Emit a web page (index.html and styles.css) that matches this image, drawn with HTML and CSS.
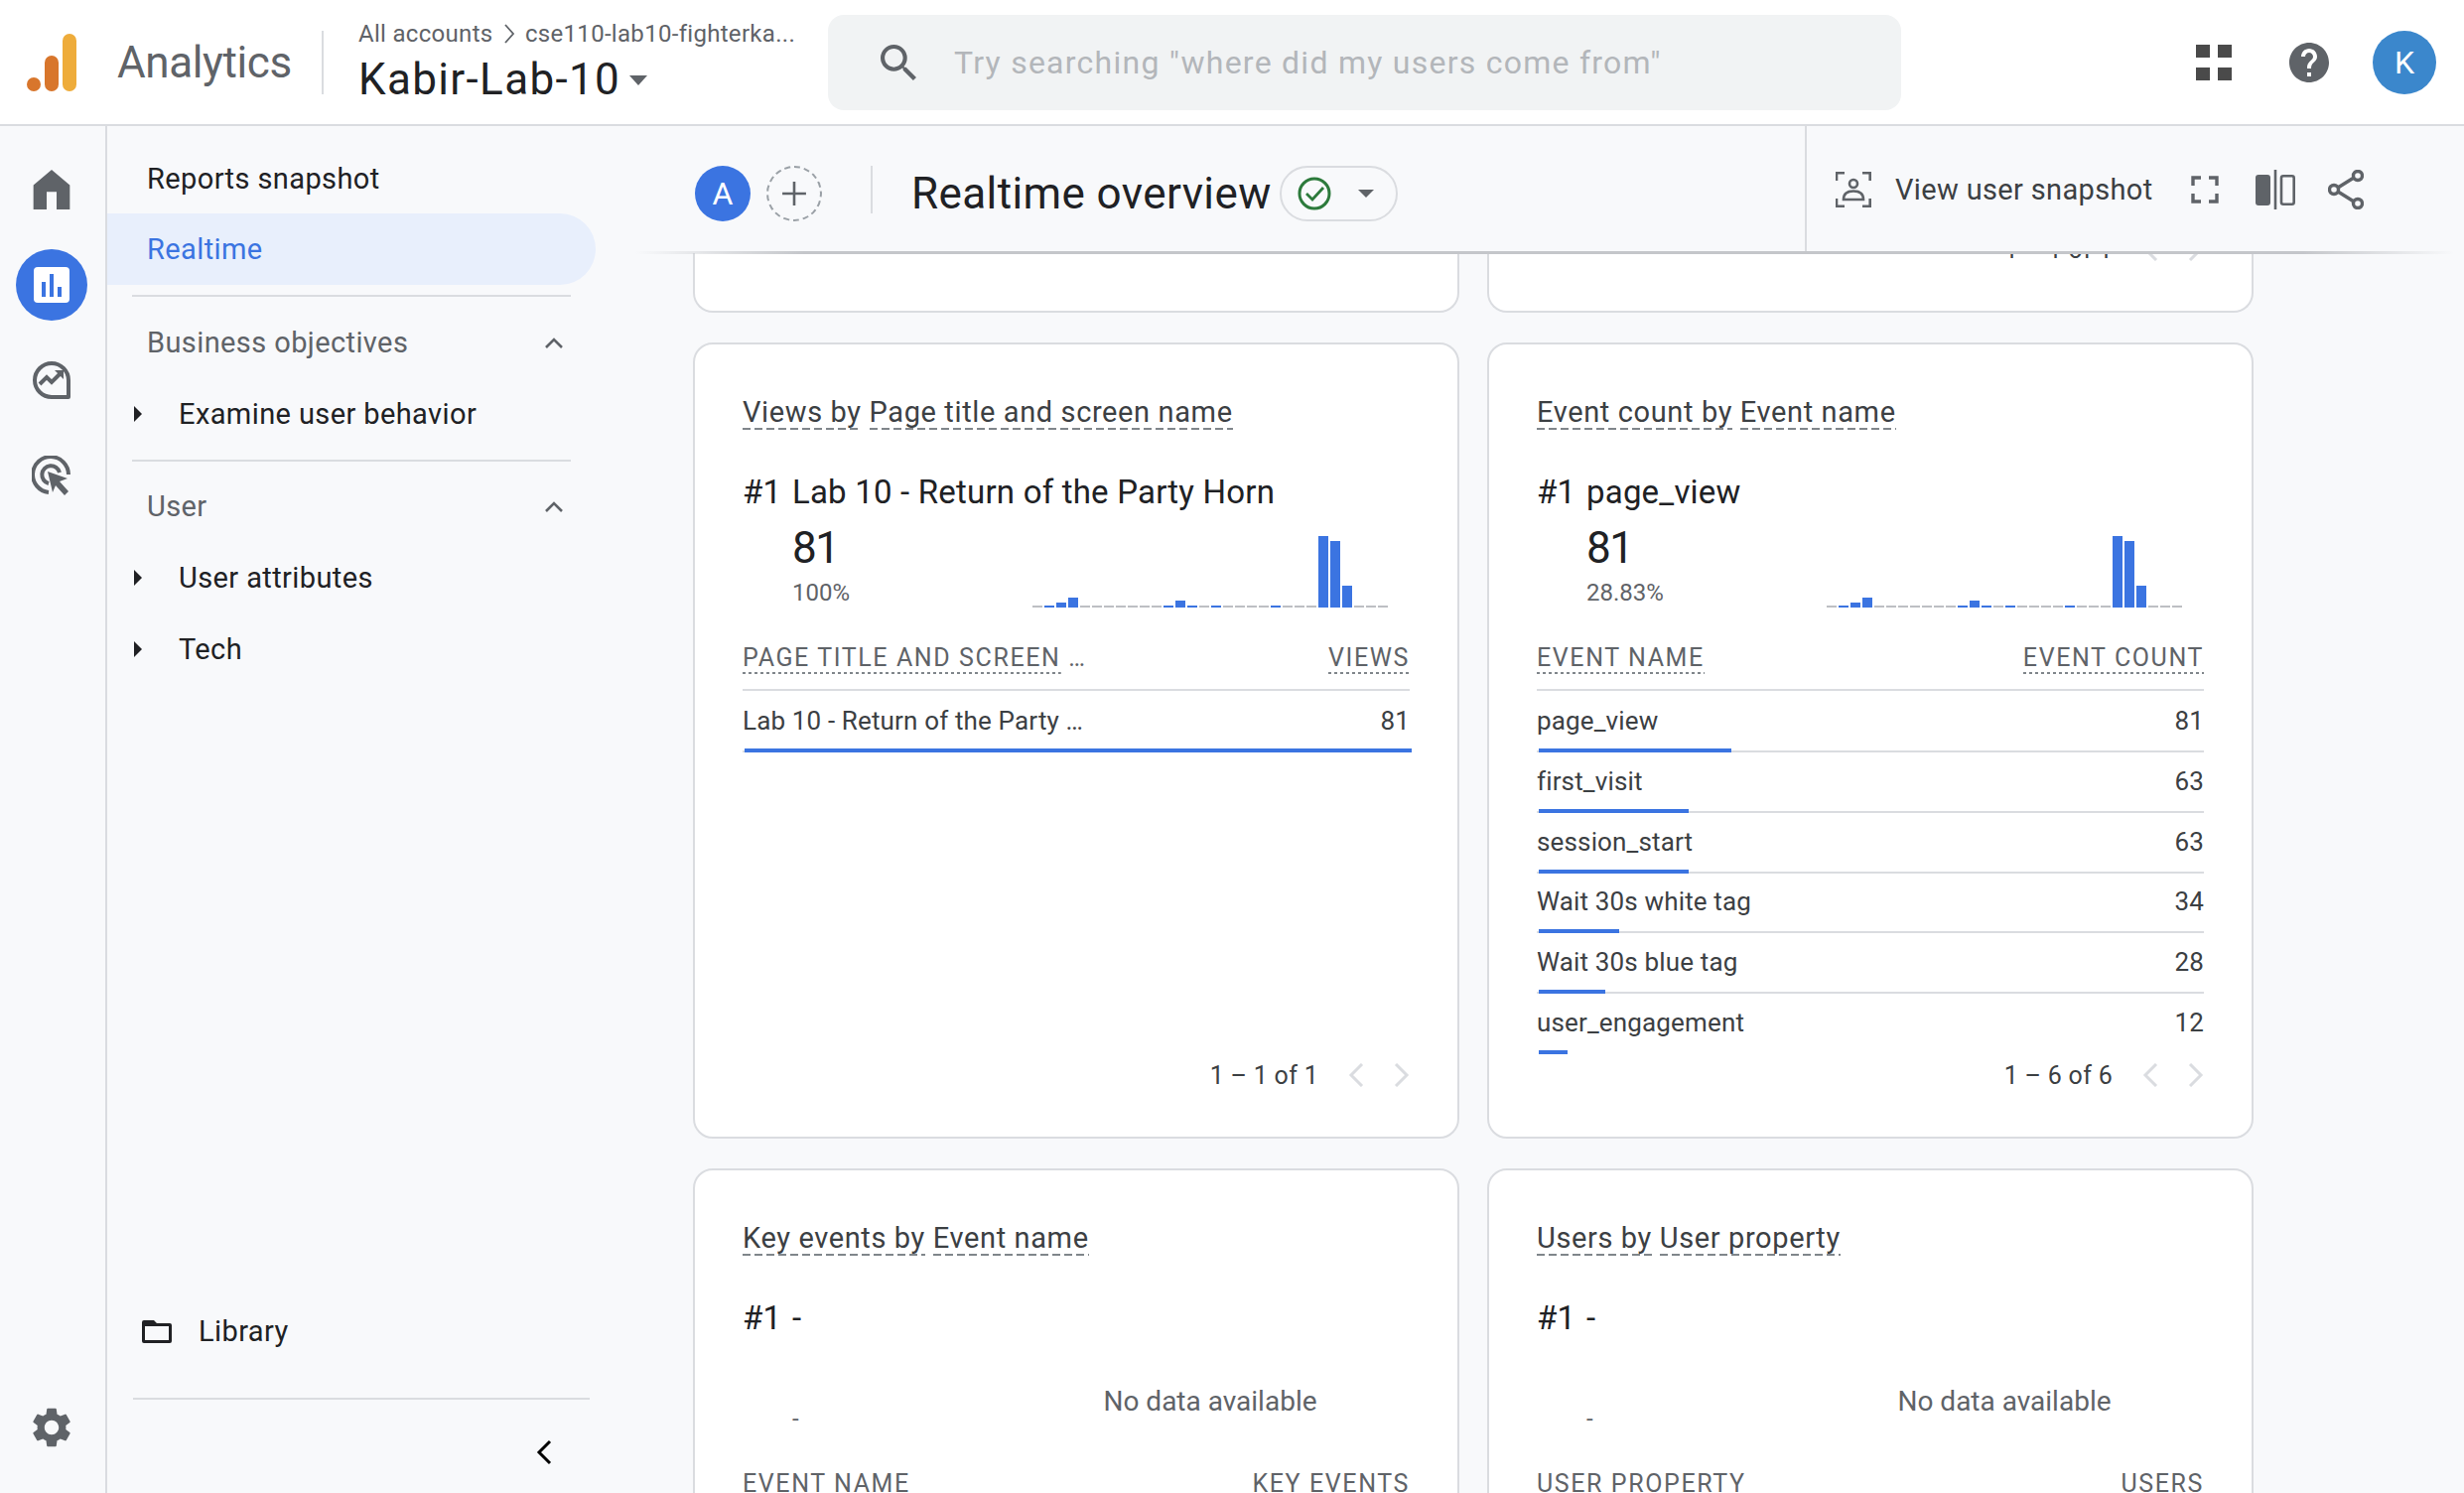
FILE: index.html
```html
<!DOCTYPE html>
<html lang="en">
<head>
    <meta charset="UTF-8">
    <title>Realtime overview - Analytics</title>
    <link rel="stylesheet" href="styles.css">
</head>
<body>
    <svg class="sprite" xmlns="http://www.w3.org/2000/svg">
        <symbol id="chart-a" viewBox="0 0 358 72">
            <g class="bar-off">
                <rect x="0" y="70" width="10" height="2"/><rect x="48" y="70" width="10" height="2"/><rect x="60" y="70" width="10" height="2"/><rect x="72" y="70" width="10" height="2"/><rect x="84" y="70" width="10" height="2"/><rect x="96" y="70" width="10" height="2"/><rect x="108" y="70" width="10" height="2"/><rect x="120" y="70" width="10" height="2"/><rect x="168" y="70" width="10" height="2"/><rect x="192" y="70" width="10" height="2"/><rect x="204" y="70" width="10" height="2"/><rect x="216" y="70" width="10" height="2"/><rect x="228" y="70" width="10" height="2"/><rect x="252" y="70" width="10" height="2"/><rect x="264" y="70" width="10" height="2"/><rect x="276" y="70" width="10" height="2"/><rect x="324" y="70" width="10" height="2"/><rect x="336" y="70" width="10" height="2"/><rect x="348" y="70" width="10" height="2"/>
            </g>
            <g class="bar-on">
                <rect x="12" y="70" width="10" height="2"/><rect x="24" y="67" width="10" height="5"/><rect x="36" y="62" width="10" height="10"/><rect x="132" y="70" width="10" height="2"/><rect x="144" y="65" width="10" height="7"/><rect x="156" y="70" width="10" height="2"/><rect x="180" y="70" width="10" height="2"/><rect x="240" y="70" width="10" height="2"/><rect x="288" y="0" width="10" height="72"/><rect x="300" y="5" width="10" height="67"/><rect x="312" y="50" width="10" height="22"/>
            </g>
        </symbol>
        <symbol id="chev-left" viewBox="0 0 16 24"><path d="M14 1 3 12l11 11" fill="none" stroke="currentColor" stroke-width="3"/></symbol>
        <symbol id="chev-right" viewBox="0 0 16 24"><path d="m2 1 11 11-11 11" fill="none" stroke="currentColor" stroke-width="3"/></symbol>
        <symbol id="chev-up" viewBox="0 0 20 12"><path d="M2 11 10 3l8 8" fill="none" stroke="currentColor" stroke-width="2.6"/></symbol>
        <symbol id="tri-right" viewBox="0 0 8 16"><path d="M0 0l8 8-8 8z" fill="currentColor"/></symbol>
    </svg>

    <header class="topbar">
        <svg class="logo" viewBox="0 0 50 58">
            <rect x="36" y="0" width="14" height="58" rx="7" fill="#eeac3b"/>
            <rect x="18" y="22" width="14" height="36" rx="7" fill="#d8762c"/>
            <circle cx="7" cy="51" r="7" fill="#d8762c"/>
        </svg>
        <div class="brand">Analytics</div>
        <div class="account">
            <div class="crumbs">All accounts
                <svg class="crumb-chev" viewBox="0 0 12 24"><path d="m2 3 8 9-8 9" fill="none" stroke="currentColor" stroke-width="1.8"/></svg>
                cse110-lab10-fighterka...</div>
            <div class="property">Kabir-Lab-10<span class="caret caret-large"></span></div>
        </div>
        <div class="search">
            <svg class="search-icon" viewBox="3 3 17.5 17.5"><path d="M15.5 14h-.79l-.28-.27A6.471 6.471 0 0 0 16 9.5 6.5 6.5 0 1 0 9.5 16c1.61 0 3.09-.59 4.23-1.57l.27.28v.79l5 4.99L20.49 19l-4.99-5zm-6 0C7.01 14 5 11.99 5 9.5S7.01 5 9.5 5 14 7.01 14 9.5 11.99 14 9.5 14z"/></svg>
            <input class="search-input" type="text" placeholder="Try searching &quot;where did my users come from&quot;">
        </div>
        <div class="top-actions">
            <div class="apps"><span></span><span></span><span></span><span></span></div>
            <svg class="help" viewBox="2 2 20 20"><path d="M12 2C6.48 2 2 6.48 2 12s4.48 10 10 10 10-4.48 10-10S17.52 2 12 2zm1 17h-2v-2h2v2zm2.07-7.75l-.9.92C13.45 12.9 13 13.5 13 15h-2v-.5c0-1.1.45-2.1 1.17-2.83l1.24-1.26c.37-.36.59-.86.59-1.41 0-1.1-.9-2-2-2s-2 .9-2 2H8c0-2.21 1.79-4 4-4s4 1.79 4 4c0 .88-.36 1.68-.93 2.25z"/></svg>
            <div class="avatar-k">K</div>
        </div>
    </header>

    <div class="layout">
        <nav class="rail">
            <div class="rail-item">
                <svg class="rail-icon" viewBox="0 0 33 36"><path d="M16.500 0 33 14v22H21V20h-9v16H0V14z"/></svg>
            </div>
            <div class="rail-item">
                <div class="rail-active">
                    <svg viewBox="0 0 36 36" width="36" height="36">
                        <rect width="36" height="36" rx="4" fill="#fff"/>
                        <path d="M8 15h4v15H8zM16 7h4v23h-4zM24 20h4v10h-4z" fill="#3b74e1"/>
                    </svg>
                </div>
            </div>
            <div class="rail-item">
                <svg class="rail-icon" viewBox="0 0 40 40">
                    <path d="M37 37V20A17 17 0 1 0 20 37z" fill="none" stroke="#5f6368" stroke-width="4" stroke-linejoin="round"/>
                    <path d="M8 24l7-7 5 5 9-9" fill="none" stroke="#5f6368" stroke-width="4"/>
                    <path d="M23 10h9v9z" fill="#5f6368"/>
                </svg>
            </div>
            <div class="rail-item">
                <svg class="rail-icon" viewBox="0 0 40 40">
                    <path d="M17 37A18 18 0 1 1 37 19" fill="none" stroke="#5f6368" stroke-width="4"/>
                    <path d="M17 28a9 9 0 1 1 11-11" fill="none" stroke="#5f6368" stroke-width="4"/>
                    <path d="M16 16l20 7-8 3 9 10-4 4-9-10-3 7z" fill="#5f6368"/>
                </svg>
            </div>
            <div class="rail-item rail-bottom">
                <svg class="rail-icon rail-gear" viewBox="2.500 2 19 20"><path d="M19.140 12.940c.04-.3.06-.61.06-.94 0-.32-.02-.64-.07-.94l2.030-1.580a.49.49 0 0 0 .12-.61l-1.920-3.320a.488.488 0 0 0-.59-.22l-2.390.96c-.5-.38-1.030-.7-1.620-.94l-.36-2.540a.484.484 0 0 0-.48-.41h-3.840c-.24 0-.43.17-.47.41l-.36 2.540c-.59.24-1.130.57-1.620.94l-2.390-.96c-.22-.08-.47 0-.59.22L2.740 8.870c-.12.21-.08.47.12.61l2.030 1.580c-.05.3-.09.63-.09.94s.02.64.07.94l-2.030 1.580a.49.49 0 0 0-.12.61l1.920 3.320c.12.22.37.29.59.22l2.390-.96c.5.38 1.030.7 1.620.94l.36 2.540c.05.24.24.41.48.41h3.840c.24 0 .44-.17.47-.41l.36-2.540c.59-.24 1.130-.56 1.620-.94l2.390.96c.22.08.47 0 .59-.22l1.920-3.320c.12-.22.07-.47-.12-.61l-2.010-1.580zM12 15.600c-1.980 0-3.600-1.620-3.600-3.600s1.620-3.600 3.600-3.600 3.600 1.620 3.600 3.600-1.620 3.600-3.600 3.600z"/></svg>
            </div>
        </nav>

        <aside class="sidenav">
            <div class="nav-link">Reports snapshot</div>
            <div class="nav-link nav-current">Realtime</div>
            <div class="nav-rule"></div>
            <div class="nav-group">Business objectives
                <svg class="nav-chev"><use href="#chev-up"/></svg>
            </div>
            <div class="nav-sub nav-sub-first"><svg class="nav-tri"><use href="#tri-right"/></svg>Examine user behavior</div>
            <div class="nav-rule nav-rule-b"></div>
            <div class="nav-group nav-group-b">User
                <svg class="nav-chev"><use href="#chev-up"/></svg>
            </div>
            <div class="nav-sub nav-sub-first"><svg class="nav-tri"><use href="#tri-right"/></svg>User attributes</div>
            <div class="nav-sub"><svg class="nav-tri"><use href="#tri-right"/></svg>Tech</div>
            <div class="nav-footer">
                <div class="library">
                    <svg class="folder" viewBox="0 0 30 24"><path d="M2 1h10l3 3h13a2 2 0 0 1 2 2v16a2 2 0 0 1-2 2H2a2 2 0 0 1-2-2V3a2 2 0 0 1 2-2zm1 6v14h24V7z" fill="#202124"/></svg>
                    Library
                </div>
                <div class="nav-foot-rule"></div>
                <div class="collapse">
                    <svg class="collapse-chev"><use href="#chev-left"/></svg>
                </div>
            </div>
        </aside>

        <main class="main">
            <div class="toolbar">
                <div class="tool-left">
                    <div class="avatar-a">A</div>
                    <div class="add-compare">
                        <svg viewBox="0 0 24 24" width="26" height="26"><path d="M12 1v22M1 12h22" stroke="#5f6368" stroke-width="2.400"/></svg>
                    </div>
                    <div class="tool-sep"></div>
                    <h1 class="page-title">Realtime overview</h1>
                    <div class="status-pill">
                        <svg viewBox="0 0 34 34" width="34" height="34">
                            <circle cx="17" cy="17" r="15" fill="none" stroke="#2c7a3b" stroke-width="3"/>
                            <path d="M9 17l6 6 11-12" fill="none" stroke="#2c7a3b" stroke-width="2.800"/>
                        </svg>
                        <span class="caret caret-small"></span>
                    </div>
                </div>
                <div class="tool-right">
                    <svg class="snap-icon" viewBox="0 0 36 36" fill="none" stroke="#5f6368" stroke-width="2.600">
                        <path d="M1 9V1.300h8M27 1.300h7.700V9M1 27v7.700h8M27 34.700h7.700V27"/>
                        <circle cx="18" cy="12" r="4"/>
                        <path d="M8 28c0-6 4-8.500 10-8.500S28 22 28 28z"/>
                    </svg>
                    <span class="snap-label">View user snapshot</span>
                    <svg class="full-icon" viewBox="0 0 28 28" fill="none" stroke="#5f6368" stroke-width="3.400"><path d="M2 10V2h8M18 2h8v8M2 18v8h8M18 26h8v-8"/></svg>
                    <svg class="compare-icon" viewBox="0 0 40 40">
                        <rect x="0" y="5" width="15" height="31" rx="3" fill="#5f6368"/>
                        <path d="M20 0v40" stroke="#5f6368" stroke-width="2.600"/>
                        <rect x="26" y="6.300" width="12.700" height="28.400" rx="2" fill="none" stroke="#5f6368" stroke-width="2.600"/>
                    </svg>
                    <svg class="share-icon" viewBox="0 0 36 40" fill="none" stroke="#5f6368" stroke-width="3.400">
                        <circle cx="30" cy="6" r="4.500"/><circle cx="6" cy="20" r="4.500"/><circle cx="30" cy="34" r="4.500"/>
                        <path d="M10 18 26 8M10 22l16 10"/>
                    </svg>
                </div>
            </div>

            <div class="cards">
                <section class="card card-cut"></section>
                <section class="card card-cut">
                    <div class="pager pager-cut">
                        <span>1 – 1 of 1</span>
                        <svg class="pager-chev"><use href="#chev-left"/></svg>
                        <svg class="pager-chev"><use href="#chev-right"/></svg>
                    </div>
                </section>

                <section class="card">
                    <h2 class="card-title"><span class="dash">Views by</span> <span class="dash">Page title and screen name</span></h2>
                    <div class="top-item"><span class="rank">#1</span>Lab 10 - Return of the Party Horn</div>
                    <div class="summary">
                        <div class="stat">
                            <div class="stat-value">81</div>
                            <div class="stat-pct">100%</div>
                        </div>
                        <svg class="spark"><use href="#chart-a"/></svg>
                    </div>
                    <div class="table-head">
                        <span><span class="dots">PAGE TITLE AND SCREEN </span> …</span>
                        <span class="dots">VIEWS</span>
                    </div>
                    <div class="row">
                        <div class="row-text"><span>Lab 10 - Return of the Party …</span><span>81</span></div>
                        <div class="track"><div class="fill" style="width:100%"></div></div>
                    </div>
                    <div class="pager">
                        <span>1 – 1 of 1</span>
                        <svg class="pager-chev"><use href="#chev-left"/></svg>
                        <svg class="pager-chev"><use href="#chev-right"/></svg>
                    </div>
                </section>

                <section class="card">
                    <h2 class="card-title"><span class="dash">Event count by</span> <span class="dash">Event name</span></h2>
                    <div class="top-item"><span class="rank">#1</span>page_view</div>
                    <div class="summary">
                        <div class="stat">
                            <div class="stat-value">81</div>
                            <div class="stat-pct">28.83%</div>
                        </div>
                        <svg class="spark"><use href="#chart-a"/></svg>
                    </div>
                    <div class="table-head">
                        <span class="dots">EVENT NAME</span>
                        <span class="dots">EVENT COUNT</span>
                    </div>
                    <div class="row">
                        <div class="row-text"><span>page_view</span><span>81</span></div>
                        <div class="track"><div class="fill" style="width:28.83%"></div></div>
                    </div>
                    <div class="row">
                        <div class="row-text"><span>first_visit</span><span>63</span></div>
                        <div class="track"><div class="fill" style="width:22.42%"></div></div>
                    </div>
                    <div class="row">
                        <div class="row-text"><span>session_start</span><span>63</span></div>
                        <div class="track"><div class="fill" style="width:22.42%"></div></div>
                    </div>
                    <div class="row">
                        <div class="row-text"><span>Wait 30s white tag</span><span>34</span></div>
                        <div class="track"><div class="fill" style="width:12.1%"></div></div>
                    </div>
                    <div class="row">
                        <div class="row-text"><span>Wait 30s blue tag</span><span>28</span></div>
                        <div class="track"><div class="fill" style="width:9.96%"></div></div>
                    </div>
                    <div class="row">
                        <div class="row-text"><span>user_engagement</span><span>12</span></div>
                        <div class="track track-last"><div class="fill" style="width:4.27%"></div></div>
                    </div>
                    <div class="pager">
                        <span>1 – 6 of 6</span>
                        <svg class="pager-chev"><use href="#chev-left"/></svg>
                        <svg class="pager-chev"><use href="#chev-right"/></svg>
                    </div>
                </section>

                <section class="card">
                    <h2 class="card-title"><span class="dash">Key events by</span> <span class="dash">Event name</span></h2>
                    <div class="top-item"><span class="rank">#1</span>-</div>
                    <div class="summary">
                        <div class="stat">
                            <div class="stat-value"></div>
                            <div class="stat-pct">-</div>
                        </div>
                        <div class="no-data">No data available</div>
                    </div>
                    <div class="table-head">
                        <span class="dots">EVENT NAME</span>
                        <span class="dots">KEY EVENTS</span>
                    </div>
                </section>

                <section class="card">
                    <h2 class="card-title"><span class="dash">Users by</span> <span class="dash">User property</span></h2>
                    <div class="top-item"><span class="rank">#1</span>-</div>
                    <div class="summary">
                        <div class="stat">
                            <div class="stat-value"></div>
                            <div class="stat-pct">-</div>
                        </div>
                        <div class="no-data">No data available</div>
                    </div>
                    <div class="table-head">
                        <span class="dots">USER PROPERTY</span>
                        <span class="dots">USERS</span>
                    </div>
                </section>
            </div>
        </main>
    </div>
</body>
</html>
```

FILE: styles.css
```css
* {
    box-sizing: border-box;
}

html {
    height: 1504px;
    overflow: hidden;
}

body {
    margin: 0;
    height: 1504px;
    overflow: hidden;
    font-family: Roboto, Arial, sans-serif;
    color: #202124;
    background: #f8f9fb;
}

.sprite {
    display: none;
}

/* top bar */
.topbar {
    display: flex;
    align-items: center;
    height: 127px;
    background: #fff;
    border-bottom: 2px solid #dadce0;
    padding-left: 27px;
}

.logo {
    width: 50px;
    height: 58px;
    flex: none;
}

.brand {
    width: 208px;
    height: 64px;
    margin-left: 41px;
    border-right: 2px solid #dadce0;
    font-size: 44px;
    line-height: 64px;
    color: #5f6368;
    letter-spacing: -0.4px;
}

.account {
    width: 508px;
    padding-left: 35px;
    flex: none;
}

.crumbs {
    font-size: 24px;
    line-height: 32px;
    color: #5f6368;
    white-space: nowrap;
    letter-spacing: 0.3px;
}

.crumb-chev {
    width: 12px;
    height: 24px;
    vertical-align: -4px;
    margin: 0 4px;
}

.property {
    font-size: 44px;
    line-height: 56px;
    margin-top: 2px;
    letter-spacing: 1.35px;
}

.caret {
    display: inline-block;
    border-left: 9px solid transparent;
    border-right: 9px solid transparent;
    border-top: 10px solid #5f6368;
    vertical-align: 6px;
}

.caret-large {
    margin-left: 9px;
    vertical-align: 9px;
}

.caret-small {
    border-left-width: 8.500px;
    border-right-width: 8.500px;
    border-top-width: 8px;
    vertical-align: 0;
    margin-left: 27px;
}

.search {
    display: flex;
    align-items: center;
    width: 1081px;
    height: 96px;
    flex: none;
    background: #f1f3f4;
    border-radius: 16px;
    padding-left: 53px;
}

.search-icon {
    width: 36px;
    height: 36px;
    fill: #5f6368;
    flex: none;
}

.search-input {
    flex: 1;
    margin-left: 38px;
    border: none;
    outline: none;
    background: transparent;
    padding: 0;
    font-family: Roboto, Arial, sans-serif;
    font-size: 32px;
    letter-spacing: 1.25px;
    color: #202124;
}

.search-input::placeholder {
    color: #b3b6ba;
    opacity: 1;
}

.top-actions {
    display: flex;
    align-items: center;
    margin-left: 297px;
}

.apps {
    display: grid;
    grid-template-columns: 14px 14px;
    grid-auto-rows: 13px;
    column-gap: 8px;
    row-gap: 10px;
    width: 36px;
}

.apps span {
    background: #4a4a4a;
}

.help {
    width: 40px;
    height: 40px;
    margin-left: 58px;
    fill: #5f6368;
}

.avatar-k {
    width: 64px;
    height: 64px;
    margin-left: 44px;
    border-radius: 50%;
    background: #3b87cc;
    color: #fff;
    font-size: 32px;
    line-height: 64px;
    text-align: center;
}

.layout {
    display: flex;
    height: 1377px;
    overflow: hidden;
}

/* left icon rail */
.rail {
    display: flex;
    flex-direction: column;
    width: 108px;
    flex: none;
    border-right: 2px solid #dadce0;
    padding: 16px 3px 42px 0;
}

.rail-item {
    display: flex;
    align-items: center;
    justify-content: center;
    height: 96px;
}

.rail-bottom {
    margin-top: auto;
    height: 48px;
}

.rail-icon {
    width: 40px;
    height: 40px;
    fill: #5f6368;
}

.rail-gear {
    width: 38px;
}

.rail-active {
    display: flex;
    align-items: center;
    justify-content: center;
    width: 72px;
    height: 72px;
    border-radius: 50%;
    background: #3b74e1;
}

/* side navigation */
.sidenav {
    display: flex;
    flex-direction: column;
    width: 532px;
    flex: none;
    padding-top: 18px;
    font-size: 29px;
    letter-spacing: 0.4px;
}

.nav-link {
    height: 70px;
    padding-left: 40px;
    line-height: 70px;
}

.nav-current {
    width: 492px;
    height: 72px;
    line-height: 72px;
    color: #3b74e1;
    background: #e8effc;
    border-radius: 0 36px 36px 0;
}

.nav-rule {
    width: 442px;
    height: 2px;
    margin: 10px 0 0 25px;
    background: #dadce0;
    flex: none;
}

.nav-rule-b {
    margin-top: 10px;
}

.nav-group {
    display: flex;
    align-items: center;
    justify-content: space-between;
    width: 460px;
    height: 64px;
    margin-top: 14px;
    padding-left: 40px;
    color: #5f6368;
}

.nav-group-b {
    margin-top: 13px;
}

.nav-chev {
    width: 20px;
    height: 12px;
    color: #5f6368;
}

.nav-sub {
    display: flex;
    align-items: center;
    height: 72px;
    padding-left: 27px;
}

.nav-sub-first {
    margin-top: 4px;
}

.nav-tri {
    width: 8px;
    height: 16px;
    margin-right: 37px;
    color: #202124;
}

.nav-footer {
    margin-top: auto;
}

.library {
    display: flex;
    align-items: center;
    height: 62px;
    padding-left: 35px;
}

.folder {
    width: 30px;
    height: 24px;
    margin-right: 27px;
}

.nav-foot-rule {
    width: 460px;
    height: 2px;
    margin: 36px 0 0 26px;
    background: #dadce0;
}

.collapse {
    height: 94px;
    padding: 40px 0 0 432px;
}

.collapse-chev {
    display: block;
    width: 16px;
    height: 26px;
    color: #000;
}

/* main area */
.main {
    flex: 1;
    min-width: 0;
    display: flex;
    flex-direction: column;
    overflow: hidden;
}

.toolbar {
    position: relative;
    z-index: 2;
    display: flex;
    height: 128px;
    flex: none;
    background: #f8f9fb;
}

.toolbar::after {
    content: "";
    position: absolute;
    left: 0;
    right: 10px;
    bottom: -1px;
    height: 3px;
    background: linear-gradient(to right, transparent, #c4c6ca 170px, #c4c6ca 1680px, transparent);
}

.tool-left {
    flex: 1;
    display: flex;
    align-items: center;
    padding: 8px 0 0 60px;
}

.avatar-a {
    width: 56px;
    height: 56px;
    border-radius: 50%;
    background: #3b74e1;
    color: #fff;
    font-size: 32px;
    line-height: 56px;
    text-align: center;
}

.add-compare {
    display: flex;
    align-items: center;
    justify-content: center;
    width: 56px;
    height: 56px;
    margin-left: 16px;
    border: 2px dashed #9aa0a6;
    border-radius: 50%;
}

.tool-sep {
    width: 2px;
    height: 48px;
    margin: -8px 0 0 49px;
    background: #dadce0;
}

.page-title {
    margin: 0 0 0 39px;
    font-size: 44px;
    font-weight: 400;
    letter-spacing: 0.4px;
    line-height: 56px;
}

.status-pill {
    display: flex;
    align-items: center;
    width: 119px;
    height: 56px;
    margin-left: 8px;
    padding-left: 16px;
    border: 2px solid #dadce0;
    border-radius: 28px;
}

.tool-right {
    display: flex;
    align-items: center;
    width: 664px;
    flex: none;
    border-left: 2px solid #dadce0;
    padding-left: 29px;
}

.snap-icon {
    width: 36px;
    height: 36px;
}

.snap-label {
    margin-left: 24px;
    font-size: 29px;
    color: #3c4043;
    letter-spacing: 0.35px;
}

.full-icon {
    width: 28px;
    height: 28px;
    margin-left: 38px;
}

.compare-icon {
    width: 40px;
    height: 40px;
    margin-left: 37px;
}

.share-icon {
    width: 36px;
    height: 40px;
    margin-left: 33px;
}

/* report cards */
.cards {
    display: grid;
    grid-template-columns: 772px 772px;
    grid-template-rows: 60px;
    grid-auto-rows: 802px;
    column-gap: 28px;
    row-gap: 30px;
    padding-left: 58px;
}

.card {
    display: flex;
    flex-direction: column;
    background: #fff;
    border: 2px solid #dadce0;
    border-radius: 20px;
    padding: 0 48px;
    color: #3c4043;
}

.card-cut {
    border-top: none;
    border-radius: 0 0 20px 20px;
    overflow: hidden;
}

.card-title {
    margin: 48px 0 0;
    font-size: 29px;
    font-weight: 400;
    line-height: 38px;
    letter-spacing: 0.62px;
}

.dash {
    display: inline-block;
    padding-top: 3px;
    line-height: 35px;
    background: repeating-linear-gradient(to right, #80868b 0 8px, transparent 8px 12px) bottom / 100% 2px no-repeat;
}

.top-item {
    margin-top: 40px;
    font-size: 33px;
    line-height: 44px;
    color: #202124;
    letter-spacing: 0.2px;
}

.rank {
    display: inline-block;
    width: 50px;
}

.summary {
    display: flex;
    align-items: flex-end;
    justify-content: space-between;
    margin-top: 10px;
    padding-right: 22px;
}

.stat {
    padding-left: 50px;
}

.stat-value {
    height: 48px;
    font-size: 44px;
    line-height: 48px;
    letter-spacing: -1.5px;
    color: #202124;
}

.stat-pct {
    margin-top: 6px;
    font-size: 24px;
    line-height: 30px;
    color: #5f6368;
}

.spark {
    width: 358px;
    height: 72px;
}

.bar-on {
    fill: #3b74e1;
}

.bar-off {
    fill: #bdbfc3;
}

.no-data {
    width: 358px;
    height: 80px;
    padding-top: 16px;
    font-size: 28px;
    line-height: 64px;
    text-align: center;
    color: #5f6368;
}

.table-head {
    display: flex;
    justify-content: space-between;
    margin-top: 31px;
    padding-top: 3px;
    padding-bottom: 15px;
    border-bottom: 2px solid #dadce0;
    font-size: 25px;
    line-height: 33px;
    letter-spacing: 1.6px;
    color: #5f6368;
}

.dots {
    display: inline-block;
    background: repeating-linear-gradient(to right, #80868b 0 3px, transparent 3px 6px) bottom / 100% 2px no-repeat;
}

.row {
    height: 60.800px;
    padding-top: 12px;
}

.row-text {
    display: flex;
    justify-content: space-between;
    font-size: 26px;
    line-height: 36px;
    letter-spacing: 0.15px;
}

.track {
    height: 4px;
    margin-top: 10px;
    background: linear-gradient(#dadce0, #dadce0) bottom / 100% 2px no-repeat;
}

.track-last {
    background: none;
}

.fill {
    height: 4px;
    margin-left: 2px;
    background: #3b74e1;
}

.pager {
    display: flex;
    align-items: center;
    justify-content: flex-end;
    height: 40px;
    flex: none;
    margin: auto 0 42px;
    font-size: 25px;
    letter-spacing: 0.3px;
    color: #3c4043;
}

.pager-cut {
    margin: -24px 0 0;
}

.pager-chev {
    width: 16px;
    height: 24px;
    margin-left: 30px;
    color: #dadce0;
}
```
